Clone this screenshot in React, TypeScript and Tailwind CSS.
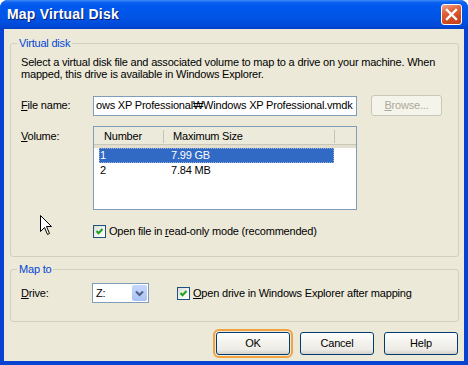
import React from 'react';

const FONT = { fontFamily: '"Liberation Sans", Arial, sans-serif' };

function Check({ label }: { label: React.ReactNode }) {
  return (
    <div className="flex items-center">
      <span className="w-[13px] h-[13px] border border-[#1C5180] bg-[linear-gradient(135deg,#dcdcd7_0%,#f4f4f0_60%,#ffffff_100%)] flex items-center justify-center">
        <svg width="11" height="11" viewBox="0 0 11 11">
          <polyline points="2.5,5 4.5,7.2 8.5,3" fill="none" stroke="#21A121" strokeWidth="2" />
        </svg>
      </span>
      <span className="ml-[3px] leading-[13px]">{label}</span>
    </div>
  );
}

function XpButton({ children, focused, disabled }: { children: React.ReactNode; focused?: boolean; disabled?: boolean }) {
  return (
    <div
      className={
        disabled
          ? 'w-[71px] h-[21px] rounded-[3px] border border-[#C9C7BA] bg-[#F5F4EA] text-[#ACA899] flex items-center justify-center'
          : `w-[74px] h-[23px] rounded-[3px] border border-[#003C74] bg-[linear-gradient(180deg,#ffffff_0%,#f4f3ee_40%,#ecebe6_80%,#d6d0c5_100%)] flex items-center justify-center text-black ${
              focused ? 'outline-2 outline-[#F0A33E] outline-offset-[1px]' : ''
            }`
      }
    >
      {children}
    </div>
  );
}

export default function App() {
  return (
    <div className="relative w-[468px] h-[365px] bg-white text-[11px] tracking-[-0.2px] text-black" style={FONT}>
      <div className="w-full h-full flex flex-col rounded-t-[8px] overflow-hidden bg-[#0842D0]">
        {/* Title bar */}
        <div className="h-[29px] shrink-0 flex items-center justify-between pl-[7px] pr-[6px] bg-[linear-gradient(180deg,#3d8ef8_0%,#0d63ef_8%,#0058ee_20%,#0054e6_60%,#004ad8_90%,#003fc4_100%)]">
          <span className="text-white font-bold text-[14px] tracking-[0.2px] [text-shadow:1px_1px_0_#0a1f6b]">Map Virtual Disk</span>
          <div className="w-[21px] h-[21px] rounded-[3px] border border-white bg-[linear-gradient(160deg,#f0a58a_0%,#e0623a_35%,#cf4a22_70%,#c2401a_100%)] flex items-center justify-center">
            <svg width="13" height="13" viewBox="0 0 13 13">
              <path d="M2 2 L11 11 M11 2 L2 11" stroke="white" strokeWidth="2.4" strokeLinecap="square" />
            </svg>
          </div>
        </div>

        {/* Body */}
        <div className="flex-1 mx-[4px] mb-[4px] bg-[#ECE9D8] flex flex-col pl-[6px] pr-[5px] pt-[14px]">
          {/* Virtual disk group */}
          <div className="relative h-[214px] border border-[#D0D0BF] rounded-[3px] pl-[10px] pt-[12px]">
            <span className="absolute -top-[7px] left-[6px] px-[2px] bg-[#ECE9D8] text-[#0046D5] leading-[13px]">Virtual disk</span>
            <p className="leading-[12px] w-[436px]">
              Select a virtual disk file and associated volume to map to a drive on your machine. When mapped, this drive is available in Windows Explorer.
            </p>

            <div className="mt-[15px] flex items-center h-[21px]">
              <span className="w-[72px]">
                <u>F</u>ile name:
              </span>
              <div className="w-[264px] h-[20px] border border-[#7F9DB9] bg-white flex items-center overflow-hidden pl-[2px] whitespace-nowrap">
                ows XP Professional₩Windows XP Professional.vmdk
              </div>
              <div className="ml-[14px]">
                <XpButton disabled>
                  <span>
                    <u>B</u>rowse...
                  </span>
                </XpButton>
              </div>
            </div>

            <div className="mt-[10px] flex items-start">
              <span className="w-[72px] pt-[2px]">
                <u>V</u>olume:
              </span>
              <div className="w-[264px] h-[84px] border border-[#7F9DB9] bg-white flex flex-col">
                <div className="h-[21px] flex items-center bg-[#EBEADB] border-b-[3px] border-[#E2DED0] shadow-[inset_0_-1px_0_#CBC7B8]">
                  <span className="w-[69px] pl-[10px]">Number</span>
                  <span className="w-[1px] h-[13px] bg-[#C7C5B2]" />
                  <span className="w-[170px] pl-[9px]">Maximum Size</span>
                  <span className="w-[1px] h-[13px] bg-[#C7C5B2]" />
                </div>
                <div className="ml-[5px] w-[235px] h-[15px] bg-[#316AC5] text-white flex items-center outline-1 outline-dotted outline-[#9AB0D8] -outline-offset-1">
                  <span className="w-[72px] pl-[1px]">1</span>
                  <span>7.99 GB</span>
                </div>
                <div className="ml-[5px] h-[14px] flex items-center">
                  <span className="w-[72px] pl-[1px]">2</span>
                  <span>7.84 MB</span>
                </div>
              </div>
            </div>

            <div className="mt-[15px] ml-[72px]">
              <Check
                label={
                  <>
                    Open file in <u>r</u>ead-only mode (recommended)
                  </>
                }
              />
            </div>
          </div>

          {/* Map to group */}
          <div className="relative mt-[12px] h-[53px] border border-[#D0D0BF] rounded-[3px] pl-[10px] pt-[13px]">
            <span className="absolute -top-[7px] left-[6px] px-[2px] bg-[#ECE9D8] text-[#0046D5] leading-[13px]">Map to</span>
            <div className="flex items-center h-[20px]">
              <span className="w-[71px]">
                <u>D</u>rive:
              </span>
              <div className="w-[57px] h-[20px] border border-[#7F9DB9] bg-white flex items-center justify-between pl-[3px] pr-[1px]">
                <span>Z:</span>
                <span className="w-[15px] h-[16px] rounded-[2px] bg-[linear-gradient(180deg,#c7d7fb_0%,#b7cbf7_60%,#a9c0f2_100%)] flex items-center justify-center">
                  <svg width="9" height="7" viewBox="0 0 9 7">
                    <polyline points="1,1.5 4.5,5 8,1.5" fill="none" stroke="#4D6185" strokeWidth="2" />
                  </svg>
                </span>
              </div>
              <div className="ml-[28px]">
                <Check
                  label={
                    <>
                      <u>O</u>pen drive in Windows Explorer after mapping
                    </>
                  }
                />
              </div>
            </div>
          </div>

          {/* Buttons */}
          <div className="mt-[10px] flex justify-end gap-[10px] pr-[1px]">
            <XpButton focused>OK</XpButton>
            <XpButton>Cancel</XpButton>
            <XpButton>Help</XpButton>
          </div>
        </div>
      </div>

      {/* Mouse pointer */}
      <svg className="absolute left-[40px] top-[215px]" width="13" height="21" viewBox="0 0 13 21">
        <path d="M0.5 0.5 L0.5 16.5 L4.5 12.5 L7.5 19.5 L9.5 18.5 L6.5 11.5 L11.5 11.5 Z" fill="white" stroke="black" strokeWidth="1" />
      </svg>
    </div>
  );
}
